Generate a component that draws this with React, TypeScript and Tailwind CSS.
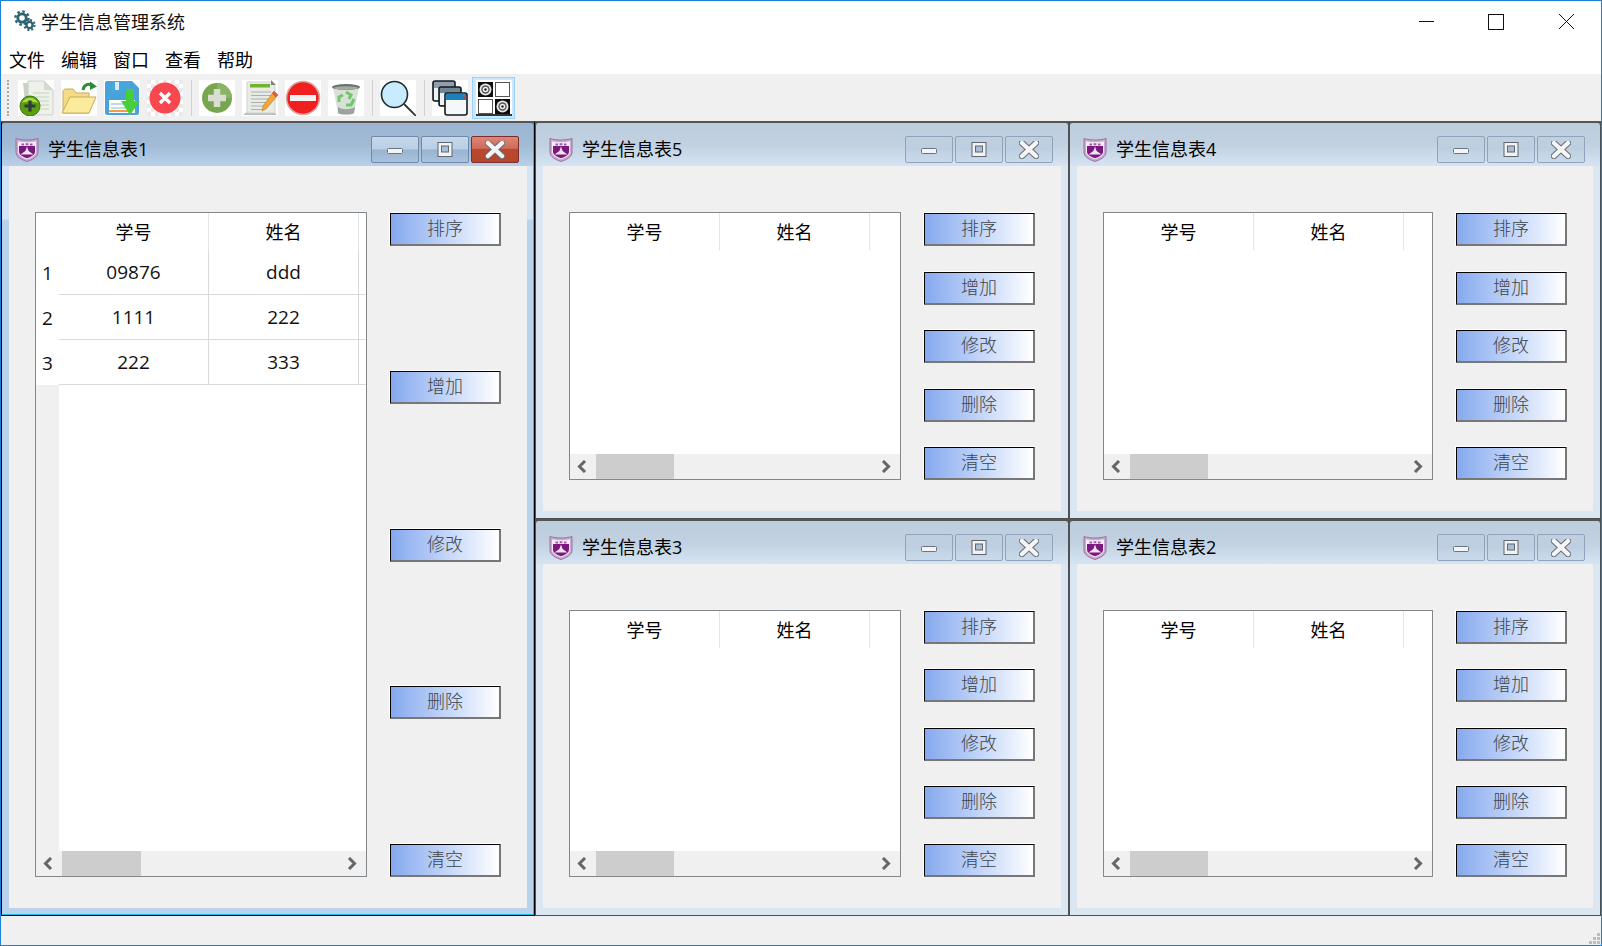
import { Fragment } from "react";
import clsx from "clsx";

const cjk = '"Noto Sans CJK SC", sans-serif';
const ui = '"Open Sans", "Noto Sans CJK SC", sans-serif';

const actionLabels = ["排序", "增加", "修改", "删除", "清空"];

const rows = [
  ["1", "09876", "ddd"],
  ["2", "1111", "222"],
  ["3", "222", "333"],
];

function GearsIcon() {
  return (
    <svg width="22" height="22" viewBox="0 0 22 22" className="shrink-0">
      <circle cx="8" cy="8" r="4.2" fill="none" stroke="#2b6374" strokeWidth="2.8" />
      <circle cx="8" cy="8" r="6.6" fill="none" stroke="#2b6374" strokeWidth="2.4" strokeDasharray="2.6 2.6" />
      <circle cx="15.5" cy="15" r="3.1" fill="none" stroke="#2b6374" strokeWidth="2.4" />
      <circle cx="15.5" cy="15" r="5.1" fill="none" stroke="#2b6374" strokeWidth="2" strokeDasharray="2 2" />
    </svg>
  );
}

function Crest() {
  return (
    <svg width="24" height="25" viewBox="0 0 24 25" className="shrink-0">
      <path d="M1 1.5 C7 3.5 17 3.5 23 1.5 V15 C23 20 17 23 12 24.5 C7 23 1 20 1 15 Z" fill="#c9abd0" stroke="#9a6ea5" strokeWidth="1" />
      <path d="M3 4.5 C8 5.5 16 5.5 21 4.5 V14.5 C21 18.5 16 21 12 22.3 C8 21 3 18.5 3 14.5 Z" fill="#f4edf5" />
      <path d="M4 9 H20 V14.5 C20 18 15.5 20.2 12 21.3 C8.5 20.2 4 18 4 14.5 Z" fill="#7a1880" />
      <path d="M12 9.5 L13.6 14 L18.5 17.5 H5.5 L10.4 14 Z" fill="#efe4f1" />
      <path d="M6.5 7.6 H9 M10.6 7.2 H13.4 M15 7.6 H17.5" stroke="#9a58a3" strokeWidth="2" />
    </svg>
  );
}

function NewDocIcon() {
  return (
    <svg viewBox="0 0 36 36" className="h-9 w-9 bg-white">
      <path d="M5 3 H20 L26 9 V32 H8 Z" fill="#c9d3c4" />
      <path d="M10 1 H26 L35 10 V35 H10 Z" fill="#eef1ea" stroke="#c7cdc4" />
      <path d="M26 1 V10 H35 Z" fill="#d3d8d0" />
      <path d="M15 13 H31 M15 17 H31 M15 21 H31 M22 25 H31 M22 29 H31" stroke="#c4d6bb" strokeWidth="1.2" />
      <circle cx="12" cy="26" r="10" fill="#5c9c10" stroke="#3e7a0a" />
      <path d="M4 23 C7 16 17 16 20 23 C15 21 9 21 4 23 Z" fill="#a8dc46" />
      <path d="M12 20.5 V31.5 M6.5 26 H17.5" stroke="#2d3d38" strokeWidth="3.2" />
    </svg>
  );
}

function OpenFolderIcon() {
  return (
    <svg viewBox="0 0 36 36" className="h-9 w-9 bg-white">
      <path d="M2 33 L2 12 C2 10 3 9 5 9 H12 L15 13 H28 V33 Z" fill="#f4dc86" stroke="#c9a95a" />
      <path d="M1 33 L9 17 H35 L28 33 Z" fill="#fbeb9c" stroke="#c9a95a" />
      <path d="M22 10 C23 4 28 3 32 6" fill="none" stroke="#2f8a3a" strokeWidth="3" />
      <path d="M29 1.5 L36 6.5 L29 10 Z" fill="#2f8a3a" />
    </svg>
  );
}

function SaveIcon() {
  return (
    <svg viewBox="0 0 36 36" className="h-9 w-9 bg-white">
      <path d="M1 3 C1 1.5 2 1 3 1 H28 L35 8 V33 C35 34 34 35 33 35 H3 C2 35 1 34 1 33 Z" fill="#4aa3d8" />
      <rect x="8" y="1" width="17" height="11" fill="#49a6dc" />
      <rect x="11" y="2" width="4" height="8" fill="#d8ecf7" />
      <rect x="5" y="20" width="26" height="13" fill="#fff" />
      <path d="M7 24 H26 M7 28 H26" stroke="#7fb8da" />
      <path d="M5 31 H24" stroke="#e9a23b" strokeWidth="2" />
      <path d="M22 9 H30 V21 H36 L26 35 L17 21 H22 Z" fill="#47cf3a" />
    </svg>
  );
}

function CloseRedIcon() {
  return (
    <svg viewBox="0 0 36 36" className="h-9 w-9">
      <defs>
        <pattern id="checker" width="8" height="8" patternUnits="userSpaceOnUse">
          <rect width="8" height="8" fill="#fff" />
          <rect width="4" height="4" fill="#eaeaea" />
          <rect x="4" y="4" width="4" height="4" fill="#eaeaea" />
        </pattern>
      </defs>
      <rect width="36" height="36" fill="url(#checker)" />
      <circle cx="18" cy="18" r="15.5" fill="#f9474f" />
      <path d="M13 13 L23 23 M23 13 L13 23" stroke="#fff" strokeWidth="3.4" />
    </svg>
  );
}

function AddIcon() {
  return (
    <svg viewBox="0 0 36 36" className="h-9 w-9 bg-white">
      <circle cx="18" cy="18" r="15" fill="#78a550" />
      <path d="M18 3 A15 15 0 0 1 33 18 H18 Z" fill="#8ab565" />
      <path d="M18 9 V27 M9 18 H27" stroke="#d8dfd2" strokeWidth="6.5" />
    </svg>
  );
}

function EditIcon() {
  return (
    <svg viewBox="0 0 36 36" className="h-9 w-9 bg-white">
      <path d="M1 35 L5 32 H32 L35 35 Z" fill="#b8bdb6" />
      <path d="M5 2 H29 L33 6 V33 H5 Z" fill="#e8ebe6" stroke="#cfd3cd" />
      <path d="M29 0 L34 5 H29 Z" fill="#7d827d" />
      <rect x="8" y="4" width="20" height="3.5" fill="#72b52c" />
      <path d="M9 12 H29 M9 15.5 H29 M9 19 H26 M9 22.5 H24 M9 26 H22 M9 29.5 H20" stroke="#a9b1ad" strokeWidth="1.2" />
      <path d="M32 11 L36 15 L24 29 L20 31 L21 26 Z" fill="#f0a63a" stroke="#b87a22" strokeWidth="0.6" />
      <path d="M32 11 L36 15 L34 17.5 L30 13.5 Z" fill="#e2574c" />
    </svg>
  );
}

function RemoveIcon() {
  return (
    <svg viewBox="0 0 36 36" className="h-9 w-9 bg-white">
      <circle cx="18" cy="18" r="16.5" fill="#f12020" stroke="#dba9a9" strokeWidth="1.6" />
      <rect x="5" y="15" width="26" height="6" fill="#f3f3f3" />
    </svg>
  );
}

function TrashIcon() {
  return (
    <svg viewBox="0 0 36 36" className="h-9 w-9 bg-white">
      <path d="M5 7 L10 33 C12 35 24 35 26 33 L31 7 Z" fill="#d8e0d8" />
      <path d="M10 27 L10 33 C12 35 24 35 26 33 L27 27 C22 30 14 30 10 27 Z" fill="#9ca39c" />
      <ellipse cx="18" cy="7" rx="14" ry="3" fill="#6c716c" />
      <ellipse cx="18" cy="8" rx="12" ry="1.8" fill="#a4aaa4" />
      <path d="M18 12 L23 15 L21 19 M26 19 L23 25 L18 25 M11 22 L11 17 L15 15" fill="none" stroke="#72c66a" strokeWidth="3" />
    </svg>
  );
}

function SearchIcon() {
  return (
    <svg viewBox="0 0 36 36" className="h-9 w-9 bg-white">
      <circle cx="14.5" cy="14.5" r="13" fill="#c8ebff" stroke="#1e2a30" strokeWidth="1.6" />
      <path d="M24 24 L36 36" stroke="#2a3338" strokeWidth="1.8" />
    </svg>
  );
}

function CascadeIcon() {
  return (
    <svg viewBox="0 0 36 36" className="h-9 w-9 bg-white">
      <rect x="1" y="1" width="22" height="20" rx="2" fill="#8ea0ad" stroke="#15191c" strokeWidth="1.6" />
      <rect x="2" y="8" width="20" height="12" fill="#eef3f6" />
      <rect x="7" y="7" width="22" height="19" rx="2" fill="#728795" stroke="#15191c" strokeWidth="1.6" />
      <rect x="8" y="13" width="20" height="12" fill="#eef3f6" />
      <rect x="13" y="13" width="22" height="22" rx="2" fill="#fff" stroke="#15191c" strokeWidth="1.6" />
      <rect x="14" y="14" width="20" height="6" fill="#1f7fb8" />
      <rect x="31" y="15" width="2" height="2" fill="#e24a3a" />
      <rect x="14" y="20" width="20" height="14" fill="#f4f8fb" />
    </svg>
  );
}

function TileIcon() {
  const target = (cx: number, cy: number) => (
    <Fragment>
      <rect x={cx - 7.5} y={cy - 7.5} width="15" height="15" fill="#0c0c0c" />
      <circle cx={cx} cy={cy} r="6" fill="#e8e8e8" />
      <circle cx={cx} cy={cy} r="4.2" fill="#555" />
      <circle cx={cx} cy={cy} r="2.8" fill="#eee" />
      <circle cx={cx} cy={cy} r="1.2" fill="#222" />
    </Fragment>
  );
  return (
    <svg viewBox="0 0 36 36" className="h-9 w-9 bg-white">
      {target(9.5, 9.5)}
      <rect x="19.5" y="2.5" width="14" height="14" fill="#fff" stroke="#555" />
      <rect x="2.5" y="19.5" width="14" height="14" fill="#fff" stroke="#555" />
      {target(26.5, 26.5)}
      <rect x="0" y="34" width="36" height="2" fill="#333" />
    </svg>
  );
}

function Separator() {
  return <div className="mx-[7px] h-[36px] w-[2px] shrink-0 border-r border-[#d2d2d2] bg-[#f0f0f0]" />;
}

function Toolbar() {
  return (
    <div className="flex h-[45px] items-center bg-[#f0f0f0] pb-[2px] pl-[6px]">
      <div className="mr-[9px] h-[36px] w-[2px] border-l-2 border-dotted border-[#a8a8a8]" />
      <div className="flex items-center gap-[7px]">
        <NewDocIcon />
        <OpenFolderIcon />
        <SaveIcon />
        <CloseRedIcon />
      </div>
      <Separator />
      <div className="flex items-center gap-[7px]">
        <AddIcon />
        <EditIcon />
        <RemoveIcon />
        <TrashIcon />
      </div>
      <Separator />
      <SearchIcon />
      <Separator />
      <CascadeIcon />
      <div className="ml-[4px] flex h-[42px] w-[43px] items-center justify-center border border-[#99d1ff] bg-[#cce8ff]">
        <TileIcon />
      </div>
    </div>
  );
}

function WinButton({ kind, active }: { kind: "min" | "max" | "close"; active: boolean }) {
  return (
    <div
      className={clsx(
        "flex h-[27px] w-[48px] items-center justify-center rounded-[2px] border",
        active && kind === "close"
          ? "border-[#7e2c2c] bg-[linear-gradient(#dc8677_0%,#cf6c5a_45%,#b9482e_50%,#b4462c_100%)]"
          : active
            ? "border-[#7288a8] bg-[linear-gradient(#c6d8ea_0%,#b9cfe6_48%,#9ab3d0_52%,#a9c2dc_100%)]"
            : "border-[#8fa3bd] bg-[linear-gradient(#c0d0e1_0%,#bccee0_50%,#bfd1e3_55%,#cadaea_100%)]",
      )}
    >
      <svg width="20" height="18" viewBox="0 0 20 18">
        {kind === "min" && (
          <rect x="2.5" y="7.5" width="15" height="5" rx="1" fill="#f4f4f4" stroke="#6b7480" />
        )}
        {kind === "max" && (
          <Fragment>
            <rect x="3" y="1.5" width="14" height="14" fill="#f2f2f2" stroke="#5f6772" />
            <rect x="6.5" y="5" width="7" height="6" fill="#a9bdd4" stroke="#5f6772" />
          </Fragment>
        )}
        {kind === "close" && (
          <Fragment>
            <path d="M3 2 L17 15 M17 2 L3 15" stroke="#6a6f78" strokeWidth="6.4" strokeLinecap="round" />
            <path d="M3 2 L17 15 M17 2 L3 15" stroke="#f5f5f5" strokeWidth="4.4" strokeLinecap="round" />
          </Fragment>
        )}
      </svg>
    </div>
  );
}

function Chevron({ dir }: { dir: "left" | "right" }) {
  return (
    <svg width="10" height="13" viewBox="0 0 10 13">
      <path
        d={dir === "left" ? "M8 1 L2.5 6.5 L8 12" : "M2 1 L7.5 6.5 L2 12"}
        fill="none"
        stroke="#666"
        strokeWidth="3"
      />
    </svg>
  );
}

function ScrollBar({ wide }: { wide: boolean }) {
  return (
    <div className="flex h-[25px] shrink-0 items-center bg-[#f0f0f0] pr-[9px]">
      <div className="flex h-full w-[26px] items-center pl-[7px]">
        <Chevron dir="left" />
      </div>
      <div className={clsx("h-full bg-[#cdcdcd]", wide ? "w-[79px]" : "w-[78px]")} />
      <div className="flex-1" />
      <Chevron dir="right" />
    </div>
  );
}

function DataTable({ withData }: { withData: boolean }) {
  const headerCell = "flex h-[37px] w-[150px] shrink-0 items-center justify-center border-r border-[#e4e4e4] pt-[1px] text-[18px] text-black";
  const dataCell = "flex h-full w-[150px] shrink-0 items-center justify-center border-r border-[#dadada] text-[19px] text-[#111]";
  return (
    <div className="flex min-w-0 flex-1 flex-col overflow-hidden border border-[#82878c] bg-white" style={{ fontFamily: ui }}>
      <div className="flex min-h-0 flex-1">
        {withData && (
          <div className="flex w-[23px] shrink-0 flex-col bg-[#f0f0f0]">
            <div className="h-[37px] bg-white" />
            {rows.map((row) => (
              <div key={row[0]} className="flex h-[45px] items-center justify-center bg-white pt-[2px] text-[19px] text-[#111]">
                {row[0]}
              </div>
            ))}
          </div>
        )}
        <div className="min-w-0 flex-1 overflow-hidden">
          <div className="flex">
            <div className={headerCell}>学号</div>
            <div className={headerCell}>姓名</div>
          </div>
          {withData &&
            rows.map((row) => (
              <div key={row[0]} className="flex h-[45px] border-b border-[#dadada]">
                <div className={dataCell}>{row[1]}</div>
                <div className={dataCell}>{row[2]}</div>
              </div>
            ))}
        </div>
      </div>
      <ScrollBar wide={withData} />
    </div>
  );
}

function ActionButton({ label }: { label: string }) {
  return (
    <div className="border-t border-l border-white">
      <div
        className="flex h-[33px] w-[111px] items-center justify-center border-t border-r-2 border-b-2 border-l border-t-black border-r-[#777] border-b-[#777] border-l-black bg-linear-to-r from-[#86a9ee] to-white pb-[3px] text-[18px] font-light text-[#3f4448]"
        style={{ fontFamily: cjk }}
      >
        {label}
      </div>
    </div>
  );
}

function SubWindow({ title, active, withData, className }: { title: string; active?: boolean; withData?: boolean; className?: string }) {
  return (
    <div className={clsx("border-t-2 border-[#555] bg-[#777]", active ? "border-x border-b border-x-black border-b-black" : "border-x border-b border-x-[#505050] border-b-[#505050]", className)}>
      <div
        className={clsx(
          "flex h-full flex-col rounded-t-[4px] pl-[7px]",
          active
            ? "border-r border-b border-[#19c0ef] bg-[linear-gradient(#b5cfe8_0px,#d5e5f5_45px,#d5e5f5_96px,#b9d3ec_97px)] pr-[6px] pb-[6px]"
            : "bg-[#dae6f2] pr-[7px] pb-[7px]",
        )}
      >
        <div
          className={clsx(
            "-ml-[7px] flex h-[43px] shrink-0 items-center rounded-t-[4px] pt-[10px] pl-[13px]",
            active
              ? "-mr-[6px] bg-linear-to-b from-[#9bb5d2] via-[#a1bad5] to-[#b8d0ea] pr-[14px]"
              : "-mr-[7px] bg-linear-to-b from-[#bccddd] via-[#c1d1e1] to-[#d6e4f2] pr-[15px]",
          )}
        >
          <Crest />
          <span className="ml-[9px] flex-1 text-[18px] text-black" style={{ fontFamily: ui }}>
            {title}
          </span>
          <div className="flex gap-[2px]">
            <WinButton kind="min" active={!!active} />
            <WinButton kind="max" active={!!active} />
            <WinButton kind="close" active={!!active} />
          </div>
        </div>
        <div className="flex min-h-0 flex-1 gap-[22px] bg-[#f0f0f0] pt-[46px] pr-[26px] pb-[31px] pl-[26px]">
          <DataTable withData={!!withData} />
          <div className="flex w-[112px] shrink-0 flex-col justify-between">
            {actionLabels.map((label) => (
              <ActionButton key={label} label={label} />
            ))}
          </div>
        </div>
      </div>
    </div>
  );
}

export default function App() {
  return (
    <div className="flex h-screen w-screen flex-col overflow-hidden border border-[#1a82d8] bg-white">
      <div className="flex h-[39px] shrink-0 items-center pl-[13px]">
        <GearsIcon />
        <span className="ml-[5px] flex-1 pt-[2px] text-[18px] text-[#111]" style={{ fontFamily: cjk }}>
          学生信息管理系统
        </span>
        <svg width="182" height="16" viewBox="0 0 182 16" className="mt-[3px] shrink-0">
          <path d="M0 7.5 H15" stroke="#111" />
          <rect x="69.5" y="0.5" width="15" height="15" fill="none" stroke="#111" strokeWidth="1" />
          <path d="M140 0 L155 15 M155 0 L140 15" stroke="#111" />
        </svg>
      </div>
      <div className="flex h-[34px] shrink-0 items-center gap-[16px] pt-[5px] pl-[8px] text-[18px] text-black" style={{ fontFamily: cjk }}>
        <span>文件</span>
        <span>编辑</span>
        <span>窗口</span>
        <span>查看</span>
        <span>帮助</span>
      </div>
      <div className="h-[2px] shrink-0 bg-[#efefef]" />
      <Toolbar />
      <div className="grid min-h-0 flex-1 grid-cols-[534px_534px_532px] grid-rows-[398px_397px] bg-[#f0f0f0]">
        <SubWindow title="学生信息表1" active withData className="row-span-2" />
        <SubWindow title="学生信息表5" />
        <SubWindow title="学生信息表4" />
        <SubWindow title="学生信息表3" />
        <SubWindow title="学生信息表2" />
      </div>
      <div className="flex h-[29px] shrink-0 items-end justify-end bg-[#f0f0f0] pr-[1px] pb-[1px]">
        <div className="grid grid-cols-3 gap-[1px]">
          {[0, 0, 1, 0, 1, 1, 1, 1, 1].map((on, i) => (
            <div key={i} className={clsx("h-[3px] w-[3px]", on ? "bg-[#bdbdbd]" : "bg-transparent")} />
          ))}
        </div>
      </div>
    </div>
  );
}
